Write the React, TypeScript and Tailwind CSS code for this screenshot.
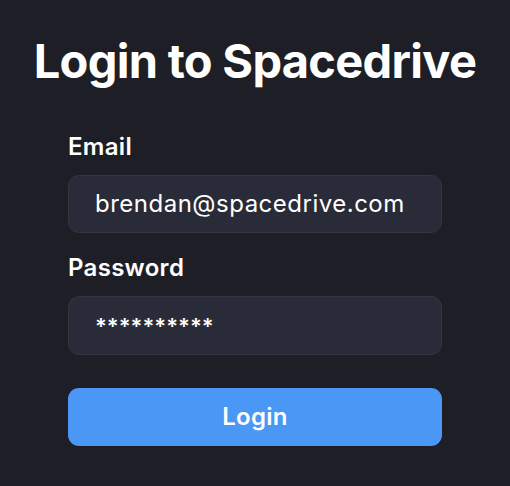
export default function App() {
  return (
    <div
      className="min-h-[486px] w-full bg-[#1d1e26] flex flex-col items-center pt-[31px] text-white"
      style={{ fontFamily: "Inter, 'Noto Sans', sans-serif" }}
    >
      <h1 className="text-[47px] font-bold leading-[60px] tracking-[-0.7px]">Login to Spacedrive</h1>
      <form className="w-[374px] mt-[42px] flex flex-col">
        <label className="text-[24px] font-semibold leading-[28px] tracking-[0.3px]">Email</label>
        <div className="mt-[14px] h-[58px] rounded-[11px] bg-[#2a2b38] border border-[#33343f] flex items-center px-[26px] text-[24px] tracking-[0.5px]">
          brendan@spacedrive.com
        </div>
        <label className="mt-[21px] text-[24px] font-semibold leading-[28px] tracking-[0.3px]">Password</label>
        <div className="mt-[14px] h-[59px] rounded-[11px] bg-[#2a2b38] border border-[#33343f] flex items-start pt-[13px] px-[26px] text-[22px] font-semibold">
          **********
        </div>
        <button
          type="button"
          className="mt-[33px] h-[58px] rounded-[11px] bg-[#4a97f6] text-[24px] font-semibold tracking-[0.3px]"
        >
          Login
        </button>
      </form>
    </div>
  );
}
